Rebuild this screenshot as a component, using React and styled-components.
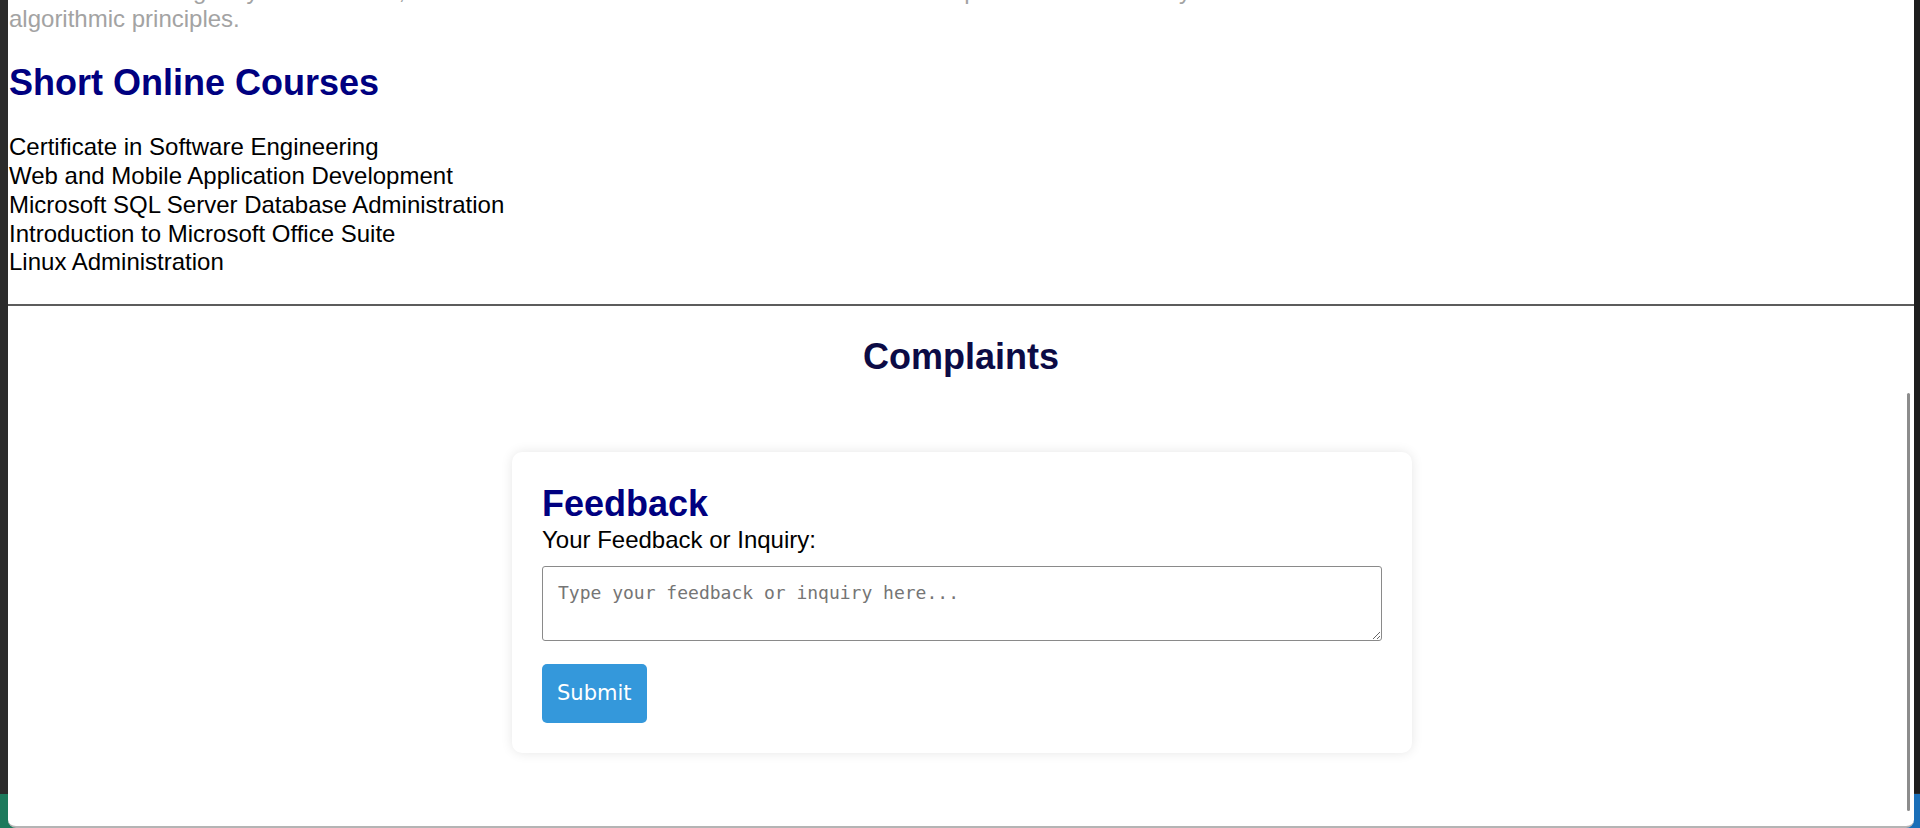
import React from "react";
import styled, { createGlobalStyle } from "styled-components";

const GlobalStyle = createGlobalStyle`
  html, body {
    margin: 0;
    padding: 0;
    height: 828px;
    overflow: hidden;
    background: #2b2b2b;
  }
  body {
    font-family: "Liberation Sans", Arial, sans-serif;
  }
`;

const Desktop = styled.div`
  display: grid;
  grid-template-columns: 8px 1fr 6px;
  height: 828px;
  background:
    linear-gradient(to right, #1d7a5c 50%, #1a6fb8 50%) bottom / 100% 34px no-repeat,
    #2b2b2b;
`;

const LeftEdge = styled.div``;

const RightEdge = styled.div`
  background: linear-gradient(to bottom, #1e1e1e calc(100% - 35px), transparent 0);
`;

const Window = styled.div`
  position: relative;
  display: flex;
  flex-direction: column;
  background: #ffffff;
  border-bottom: 2px solid #b4b4b4;
  border-radius: 0 0 8px 8px;
  overflow: hidden;
  font-size: 24px;
  line-height: 1.2;
  color: #000;
`;

const Scrollbar = styled.div`
  position: absolute;
  right: 4px;
  top: 393px;
  width: 3px;
  height: 418px;
  border-radius: 2px;
  background: #8c8c8c;
`;

const Intro = styled.p`
  margin: -23.5px 0 0;
  padding: 0 1px;
  color: #a3a3a3;
  white-space: nowrap;
`;

const SectionTitle = styled.h2`
  margin: ${(p) => p.$top || 0}px 0 0;
  padding: 0 1px;
  font-size: 36px;
  font-weight: bold;
  line-height: 1.2;
  color: ${(p) => p.$color || "#000080"};
  text-align: ${(p) => (p.$center ? "center" : "left")};
`;

const CourseList = styled.ul`
  list-style: none;
  margin: 29px 0 0;
  padding: 0 1px;
`;

const Course = styled.li`
  margin: 0;
`;

const Divider = styled.hr`
  margin: 27.2px 0 0;
  border: 0;
  height: 2px;
  background: #5c5c5c;
`;

const CardRow = styled.div`
  display: flex;
  justify-content: center;
  padding-left: 2px;
  margin-top: 73.5px;
`;

const Card = styled.form`
  display: flex;
  flex-direction: column;
  box-sizing: border-box;
  width: 900px;
  padding: 30px;
  background: #fff;
  border-radius: 10px;
  box-shadow: 0 0 12px rgba(0, 0, 0, 0.1);
`;

const CardTitle = styled.h3`
  margin: 0;
  font-size: 36px;
  font-weight: bold;
  line-height: 1.2;
  color: #000080;
`;

const Label = styled.label`
  display: block;
  margin-top: 1px;
  color: #000;
`;

const TextArea = styled.textarea`
  box-sizing: border-box;
  width: 100%;
  height: 75px;
  margin-top: 11px;
  padding: 15px;
  border: 1px solid #8a8a8a;
  border-radius: 3px;
  font-family: "DejaVu Sans Mono", "Liberation Mono", monospace;
  font-size: 18px;
  line-height: 21px;
  color: #000;
  &::placeholder {
    color: #757575;
  }
`;

const SubmitButton = styled.button`
  align-self: flex-start;
  margin-top: 23px;
  padding: 15px;
  border: 0;
  border-radius: 5px;
  background: #3498db;
  color: #fff;
  font-family: "DejaVu Sans", Verdana, sans-serif;
  font-size: 21px;
  line-height: 29px;
  cursor: pointer;
`;

const courses = [
  "Certificate in Software Engineering",
  "Web and Mobile Application Development",
  "Microsoft SQL Server Database Administration",
  "Introduction to Microsoft Office Suite",
  "Linux Administration",
];

function App() {
  return (
    <>
      <GlobalStyle />
      <Desktop>
        <LeftEdge />
        <Window>
          <Intro>
            The course is taught by our lecturers, who teach the essentials of
            modern software development and the theory behind its use of
            mathematical and
            <br />
            algorithmic principles.
          </Intro>
          <SectionTitle $top={27}>Short Online Courses</SectionTitle>
          <CourseList>
            {courses.map((c) => (
              <Course key={c}>{c}</Course>
            ))}
          </CourseList>
          <Divider />
          <SectionTitle $top={29} $center $color="#0c0b45">
            Complaints
          </SectionTitle>
          <CardRow>
            <Card onSubmit={(e) => e.preventDefault()}>
              <CardTitle>Feedback</CardTitle>
              <Label htmlFor="feedback">Your Feedback or Inquiry:</Label>
              <TextArea
                id="feedback"
                placeholder="Type your feedback or inquiry here..."
              />
              <SubmitButton type="submit">Submit</SubmitButton>
            </Card>
          </CardRow>
          <Scrollbar />
        </Window>
        <RightEdge />
      </Desktop>
    </>
  );
}

export default App;
